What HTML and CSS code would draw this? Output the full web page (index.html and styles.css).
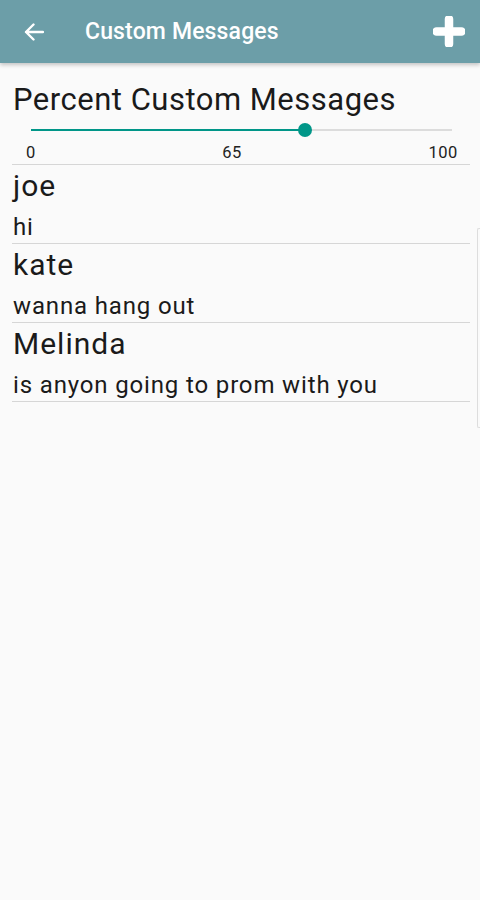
FILE: index.html
```html
<!DOCTYPE html>
<html lang="en">
<head>
    <meta charset="UTF-8">
    <meta name="viewport" content="width=device-width, initial-scale=1.0">
    <title>Custom Messages</title>
    <link rel="stylesheet" href="styles.css">
</head>
<body>
    <header class="app-bar">
        <button class="icon-btn back-btn" aria-label="Back">
            <svg width="20" height="18" viewBox="0 0 20 18">
                <path d="M19 9H2M9.5 1.5L2 9l7.5 7.5" fill="none" stroke="#fff" stroke-width="2.4" stroke-linecap="round" stroke-linejoin="round"/>
            </svg>
        </button>
        <h1 class="app-title">Custom Messages</h1>
        <button class="icon-btn add-btn" aria-label="Add">
            <svg width="32" height="31" viewBox="0 0 32 31">
                <path d="M16 3v25M3.5 15.5h25" fill="none" stroke="#fff" stroke-width="8.5" stroke-linecap="round"/>
            </svg>
        </button>
    </header>

    <main class="content">
        <h2 class="percent-title">Percent Custom Messages</h2>
        <div class="slider">
            <div class="track">
                <div class="track-fill" style="width: 65%;"></div>
                <div class="thumb" style="left: 65%;"></div>
            </div>
        </div>
        <div class="slider-labels">
            <span>0</span>
            <span>65</span>
            <span>100</span>
        </div>

        <ul class="message-list">
            <li class="message-item">
                <div class="message-name">joe</div>
                <div class="message-text">hi</div>
            </li>
            <li class="message-item">
                <div class="message-name">kate</div>
                <div class="message-text">wanna hang out</div>
            </li>
            <li class="message-item">
                <div class="message-name">Melinda</div>
                <div class="message-text">is anyon going to prom with you</div>
            </li>
        </ul>
        <div class="scroll-indicator"></div>
    </main>
</body>
</html>
```

FILE: styles.css
```css
body {
    font-family: Roboto, "Noto Sans", Arial, sans-serif;
    background-color: #FAFAFA;
    margin: 0;
    padding: 0;
    min-height: 100vh;
    color: #1A1A1A;
}

/* Top bar */
.app-bar {
    height: 63px;
    background-color: #6C9EA8;
    display: flex;
    align-items: center;
    box-shadow: 0px 2px 4px rgba(0, 0, 0, 0.22);
    position: relative;
    z-index: 10;
}
.icon-btn {
    background: none;
    border: none;
    padding: 0;
    margin: 0;
    display: flex;
    align-items: center;
    justify-content: center;
    cursor: pointer;
}
.back-btn {
    margin-left: 23px;
    margin-right: 41px;
    width: 21px;
    height: 20px;
}
.app-title {
    flex: 1;
    margin: 0;
    color: #FFFFFF;
    font-size: 23px;
    font-weight: 500;
    letter-spacing: 0.15px;
}
.add-btn {
    margin-right: 15px;
    width: 32px;
    height: 31px;
}

/* Content */
.content {
    position: relative;
    padding: 19px 10px 0 12px;
}
.percent-title {
    margin: 0 0 0 1px;
    font-size: 31px;
    font-weight: 400;
    line-height: 36px;
    letter-spacing: 0.5px;
    color: #1A1A1A;
}
.slider {
    padding: 5px 18px 0 19px;
    height: 14px;
}
.track {
    position: relative;
    height: 2px;
    top: 6px;
    background-color: #DCDCDC;
}
.track-fill {
    height: 100%;
    background-color: #009688;
}
.thumb {
    position: absolute;
    top: -6px;
    width: 14px;
    height: 14px;
    margin-left: -7px;
    border-radius: 50%;
    background-color: #009688;
}
.slider-labels {
    display: flex;
    justify-content: space-between;
    padding: 7px 12px 2px 14px;
    font-size: 16.5px;
    line-height: 18px;
    letter-spacing: 0.6px;
    color: #222;
    border-bottom: 1px solid #D6D6D6;
}

/* Message list */
.message-list {
    list-style: none;
    margin: 0;
    padding: 0;
}
.message-item {
    border-bottom: 1px solid #D6D6D6;
    padding: 3px 0 1px 1px;
}
.message-name {
    font-size: 30px;
    line-height: 36px;
    letter-spacing: 1px;
    color: #1A1A1A;
}
.message-text {
    margin-top: 8px;
    font-size: 24px;
    line-height: 30px;
    letter-spacing: 0.85px;
    color: #1A1A1A;
}
.scroll-indicator {
    position: absolute;
    right: 0;
    top: 165px;
    width: 2px;
    height: 198px;
    border: 1px solid #DDDDDD;
    border-right: none;
    border-radius: 2px 0 0 2px;
}
```
